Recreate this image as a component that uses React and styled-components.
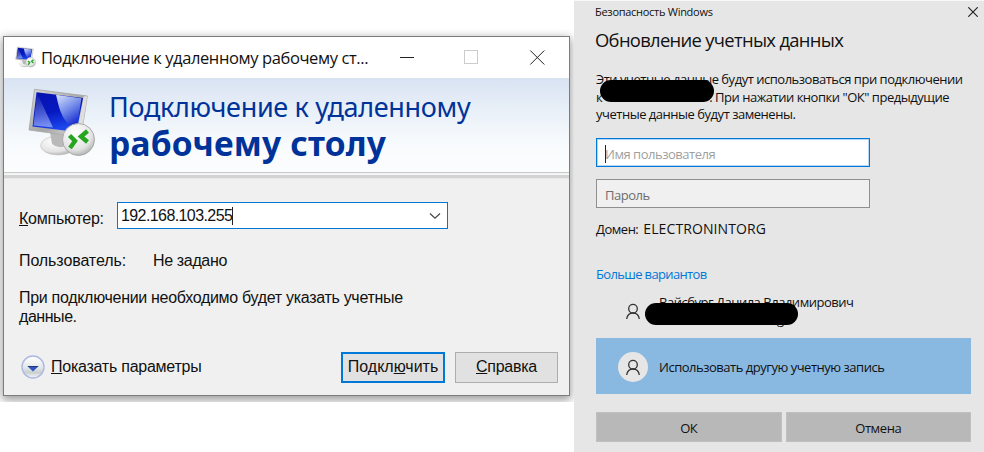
import React from "react";
import styled, { createGlobalStyle } from "styled-components";

const GlobalStyle = createGlobalStyle`
  * { box-sizing: border-box; }
  body { margin: 0; background: #fff; overflow: hidden; }
`;

const Page = styled.main`
  display: flex;
  width: 984px;
  height: 452px;
  background: #fff;
  font-family: "Open Sans", "Noto Sans", sans-serif;
  color: #111;
`;

const Desktop = styled.section`
  width: 574px;
  height: 375px;
  margin-top: 27px;
  padding: 9px 4px 7px 3px;
  background: #fff;
  overflow: hidden;
`;

const RdpWindow = styled.div`
  display: flex;
  flex-direction: column;
  width: 567px;
  height: 360px;
  border: 1px solid #7c7c7c;
  background: #f0f0f0;
  box-shadow: 0 3px 9px 1px rgba(0, 0, 0, 0.4);
`;

const TitleBar = styled.header`
  display: flex;
  align-items: center;
  height: 41px;
  flex: none;
  padding-left: 11px;
  background: #fff;
`;

const WindowTitle = styled.span`
  width: 330px;
  margin-left: 4px;
  font-size: 16.5px;
  letter-spacing: -0.39px;
  white-space: nowrap;
`;

const WindowControls = styled.div`
  display: flex;
  gap: 50px;
  margin-left: 29px;
`;

const Banner = styled.div`
  display: flex;
  height: 95px;
  flex: none;
  padding: 10px 0 0 23px;
  background: linear-gradient(#d8e3f2, #e9f0f8 35%, #f8fbfd 70%, #fcfdfd);
  border-bottom: 1px solid #c6c9cc;
`;

const BannerText = styled.div`
  display: flex;
  flex-direction: column;
  margin-left: 10px;
  color: #003399;
  font-family: "Noto Sans", sans-serif;
  white-space: nowrap;
`;

const BannerLight = styled.span`
  font-size: 27px;
  line-height: 38px;
  letter-spacing: -0.32px;
`;

const BannerBold = styled.span`
  font-size: 33.5px;
  font-weight: 700;
  line-height: 35px;
  letter-spacing: 0.2px;
`;

const Groove = styled.div`
  height: 6px;
  flex: none;
  background: linear-gradient(#f4f4f4 0 2px, #d3d3d3 2px 5px, #e8e8e8 5px);
`;

const RdpBody = styled.div`
  display: flex;
  flex-direction: column;
  flex: 1;
  padding: 23px 11px 12px 15px;
  font-family: "Liberation Sans", Arial, sans-serif;
  font-size: 16px;
  letter-spacing: -0.2px;
`;

const Row = styled.div`
  display: flex;
  align-items: center;
`;

const Copy = styled.span`
  width: ${(p) => (p.$w ? p.$w + "px" : "auto")};
  letter-spacing: ${(p) => p.$track || -0.25}px;
  white-space: nowrap;
  line-height: 19px;
`;

const ComputerLabel = styled(Copy)`
  padding-top: 5px;
`;

const Combo = styled.div`
  display: flex;
  align-items: center;
  width: 331px;
  height: 27px;
  padding: 0 6px 0 3px;
  border: 1px solid #0078d7;
  background: #fff;
  line-height: 19px;
`;

const ComboValue = styled.span`
  letter-spacing: -0.59px;
`;

const Caret = styled.span`
  width: 1px;
  height: 18px;
  margin-right: ${(p) => (p.$overlap ? -1 : 0)}px;
  background: #222;
`;

const Spacer = styled.span`
  flex: 1;
`;

const UserRow = styled(Row)`
  margin-top: 22px;
`;

const Notice = styled.div`
  display: flex;
  flex-direction: column;
  margin-top: 18px;
`;

const Footer = styled(Row)`
  margin-top: auto;
  height: 31px;
  padding-left: 2px;
`;

const FooterIcon = styled.span`
  display: flex;
  padding-bottom: 2px;
`;

const ToggleText = styled(Copy)`
  margin-left: 6px;
  padding-bottom: 2px;
`;

const PushButton = styled.button`
  width: ${(p) => (p.$primary ? 104 : 103)}px;
  height: 31px;
  margin-left: 10px;
  padding: 0 0 1px;
  border: ${(p) => (p.$primary ? "2px solid #0078d7" : "1px solid #adadad")};
  background: #e1e1e1;
  color: #111;
  font: inherit;
  letter-spacing: ${(p) => (p.$primary ? 0 : -0.25)}px;
`;

const Security = styled.section`
  display: flex;
  flex-direction: column;
  width: 410px;
  height: 452px;
  padding: 0 13px 0 22px;
  border-top: 1px solid #f8f8f8;
  background: #e6e6e6;
  font-size: 13px;
  letter-spacing: -0.48px;
`;

const SecurityBar = styled.header`
  display: flex;
  justify-content: space-between;
  align-items: center;
  height: 21px;
  margin: 0 -7px 0 -1px;
  font-size: 11px;
  letter-spacing: -0.28px;
`;

const Line = styled.span`
  white-space: pre;
`;

const Heading = styled.h1`
  margin: 5px 0 0 -1px;
  font-size: 18.4px;
  font-weight: 400;
  line-height: 26px;
  letter-spacing: -0.68px;
  white-space: nowrap;
`;

const Paragraph = styled.div`
  position: relative;
  display: flex;
  flex-direction: column;
  margin-top: 18px;
  line-height: 17.5px;
`;

const SplitLine = styled.div`
  display: flex;
`;

const Redaction = styled.span`
  position: absolute;
  left: ${(p) => p.$x}px;
  top: ${(p) => p.$y}px;
  width: ${(p) => p.$w}px;
  height: 22px;
  border-radius: 11px;
  background: #000;
`;

const HiddenHost = styled.span`
  width: 107px;
`;

const Field = styled.div`
  display: flex;
  align-items: center;
  width: 274px;
  height: 29px;
  margin-top: ${(p) => p.$gap}px;
  padding: 3px 8px 0;
  border: 1px solid ${(p) => (p.$focus ? "#0078d7" : "#8f8f8f")};
  outline: ${(p) => (p.$focus ? "1px solid rgba(0, 120, 215, 0.3)" : "none")};
  outline-offset: -2px;
  background: ${(p) => (p.$focus ? "#fff" : "#f0f0f0")};
  color: ${(p) => (p.$focus ? "#9f9f9f" : "#6e6e6e")};
`;

const Domain = styled.div`
  display: flex;
  align-items: center;
  height: 20px;
  margin-top: 11px;
`;

const DomainName = styled.span`
  margin-left: 5px;
  font-size: 14px;
  letter-spacing: 0.1px;
`;

const MoreLink = styled.a`
  margin-top: 25px;
  line-height: 20px;
  color: #0078d7;
  letter-spacing: -0.65px;
`;

const Account = styled.div`
  position: relative;
  display: flex;
  align-items: center;
  height: ${(p) => (p.$active ? 56 : 54)}px;
  width: 375px;
  padding: ${(p) => (p.$active ? 2 : 0)}px 0 0 22px;
  background: ${(p) => (p.$active ? "#89b9e1" : "transparent")};
`;

const Avatar = styled.span`
  display: flex;
  align-items: center;
  justify-content: center;
  width: 30px;
  height: 30px;
  margin-right: 11px;
  padding-top: 1px;
  border-radius: 50%;
  background: #e6e6e6;
`;

const AccountName = styled.div`
  display: flex;
  flex-direction: column;
  line-height: 17px;
`;

const AccountMail = styled.span`
  padding-left: 118px;
`;

const Actions = styled.div`
  display: grid;
  grid-template-columns: 1fr 1fr;
  gap: 4px;
  width: 375px;
  margin-top: 18px;
`;

const ActionButton = styled.button`
  height: 30px;
  padding: 3px 0 0;
  border: 1px solid #c0c0c0;
  background: #b8b8b8;
  color: #111;
  font: inherit;
  letter-spacing: -0.4px;
`;

function RemoteIcon({ size, h, id }) {
  return (
    <svg width={size} height={h} viewBox="0 0 72 72">
      <defs>
        <linearGradient id={id + "s"} x1="0" y1="0" x2="0.3" y2="1">
          <stop offset="0" stopColor="#0713b0" />
          <stop offset="0.55" stopColor="#0618c0" />
          <stop offset="1" stopColor="#1c49ee" />
        </linearGradient>
        <linearGradient id={id + "g"} x1="0.1" y1="0" x2="0.6" y2="1">
          <stop offset="0" stopColor="#d3dcfa" />
          <stop offset="0.5" stopColor="#7089e8" />
          <stop offset="1" stopColor="#0a1ed0" />
        </linearGradient>
        <linearGradient id={id + "l"} x1="0" y1="0" x2="0.1" y2="1">
          <stop offset="0" stopColor="#0a18a8" />
          <stop offset="1" stopColor="#a9bcff" />
        </linearGradient>
        <linearGradient id={id + "f"} x1="0" y1="0" x2="1" y2="1">
          <stop offset="0" stopColor="#d9d9d9" />
          <stop offset="0.55" stopColor="#a5a5a5" />
          <stop offset="1" stopColor="#ededed" />
        </linearGradient>
        <radialGradient id={id + "b"} cx="0.4" cy="0.3" r="0.75">
          <stop offset="0" stopColor="#fff" />
          <stop offset="0.7" stopColor="#e3e3e3" />
          <stop offset="1" stopColor="#aaa" />
        </radialGradient>
      </defs>
      <ellipse cx="31" cy="57.5" rx="17.5" ry="9.5" fill={`url(#${id}b)`} stroke="#c2c2c2" strokeWidth="0.6" />
      <path d="M23 44 L40 48 L39 58 Q31 61 25 56Z" fill="#b9b9b9" />
      <path d="M7.5 1.3 L60.3 8 L54 49 L2 42Z" fill={`url(#${id}f)`} stroke="#a5a5a5" strokeWidth="0.8" />
      <path d="M56.5 8.5 L60.3 8 L55 42 L50 46Z" fill="#dedede" />
      <path d="M9.5 4.3 L56 10 L49.5 44 L5.5 38.5Z" fill={`url(#${id}s)`} />
      <path d="M29 6.8 L54.5 10.2 L49.5 41 Q38 38 32 19Z" fill={`url(#${id}g)`} />
      <path d="M10 5 L26 39.5 L6.5 37.5Z" fill={`url(#${id}l)`} opacity="0.65" />
      <circle cx="51.5" cy="51.5" r="16" fill={`url(#${id}b)`} stroke="#aaa" strokeWidth="1" />
      <path d="M42.5 47.5 L48 53 L43 60" fill="none" stroke="#26a51f" strokeWidth="4.4" />
      <path d="M60.5 43 L54 48.5 L60.5 54" fill="none" stroke="#26a51f" strokeWidth="4.4" />
    </svg>
  );
}

const Person = () => (
  <svg width="16" height="17" viewBox="0 0 16 17" fill="none" stroke="#333" strokeWidth="1.3">
    <circle cx="8" cy="5.7" r="4.3" />
    <path d="M1.7 16 C2.2 12.5 4.5 10 8 10 C11.5 10 13.8 12.5 14.3 16" />
  </svg>
);

const CloseIcon = ({ size, width }) => (
  <svg width={size} height={size} viewBox="0 0 14 14">
    <path d="M0.4 0.4 L13.6 13.6 M13.6 0.4 L0.4 13.6" stroke="#222" strokeWidth={width} />
  </svg>
);

const ExpandIcon = () => (
  <svg width="24" height="24" viewBox="0 0 24 24">
    <defs>
      <linearGradient id="expand" x1="0" y1="0" x2="0" y2="1">
        <stop offset="0" stopColor="#fff" />
        <stop offset="0.5" stopColor="#e6e9eb" />
        <stop offset="0.75" stopColor="#c9d0d0" />
        <stop offset="1" stopColor="#f6f8f8" />
      </linearGradient>
    </defs>
    <circle cx="12" cy="12" r="11" fill="url(#expand)" stroke="#adb8e2" strokeWidth="1.4" />
    <path d="M6.8 11.4 H17.2 L12 16.5Z" fill="#3154c4" />
    <path d="M6.8 11.5 H17.2" stroke="#203878" strokeWidth="1" />
  </svg>
);

export default function App() {
  return (
    <>
      <GlobalStyle />
      <Page>
        <Desktop>
          <RdpWindow>
            <TitleBar>
              <RemoteIcon size={22} h={23} id="small" />
              <WindowTitle>Подключение к удаленному рабочему ст...</WindowTitle>
              <WindowControls>
                <svg width="14" height="14"><path d="M0 7.5 H14" stroke="#222" /></svg>
                <svg width="14" height="14"><rect x="0.5" y="0.5" width="13" height="13" fill="none" stroke="#ccc" /></svg>
                <svg width="17" height="15"><path d="M2.3 0.5 L16.3 14.5 M16.3 0.5 L2.3 14.5" stroke="#222" /></svg>
              </WindowControls>
            </TitleBar>
            <Banner>
              <RemoteIcon size={72} h={72} id="large" />
              <BannerText>
                <BannerLight>Подключение к удаленному</BannerLight>
                <BannerBold>рабочему столу</BannerBold>
              </BannerText>
            </Banner>
            <Groove />
            <RdpBody>
              <Row>
                <ComputerLabel $w={98}><u>К</u>омпьютер:</ComputerLabel>
                <Combo>
                  <ComboValue>192.168.103.255</ComboValue>
                  <Caret />
                  <Spacer />
                  <svg width="12" height="8"><path d="M1 1.5 L6 6.2 L11 1.5" fill="none" stroke="#444" strokeWidth="1.2" /></svg>
                </Combo>
              </Row>
              <UserRow>
                <Copy $w={134} $track={-0.1}>Пользователь:</Copy>
                <Copy $track={-0.35}>Не задано</Copy>
              </UserRow>
              <Notice>
                <Copy $track={-0.3}>При подключении необходимо будет указать учетные</Copy>
                <Copy $track={-0.45}>данные.</Copy>
              </Notice>
              <Footer>
                <FooterIcon><ExpandIcon /></FooterIcon>
                <ToggleText><u>П</u>оказать параметры</ToggleText>
                <Spacer />
                <PushButton $primary>Подкл<u>ю</u>чить</PushButton>
                <PushButton><u>С</u>правка</PushButton>
              </Footer>
            </RdpBody>
          </RdpWindow>
        </Desktop>
        <Security>
          <SecurityBar>
            <Line>Безопасность Windows</Line>
            <CloseIcon size={10} width={1.6} />
          </SecurityBar>
          <Heading>Обновление учетных данных</Heading>
          <Paragraph>
            <Line>Эти учетные данные будут использоваться при подключении</Line>
            <SplitLine>
              <Line>к</Line>
              <HiddenHost />
              <Line>. При нажатии кнопки "ОК" предыдущие</Line>
            </SplitLine>
            <Line>учетные данные будут заменены.</Line>
            <Redaction $x={4} $y={9} $w={114} />
          </Paragraph>
          <Field $focus $gap={14}>
            <Caret $overlap />
            <Line>Имя пользователя</Line>
          </Field>
          <Field $gap={12}>
            <Line>Пароль</Line>
          </Field>
          <Domain>
            <Line>Домен:</Line>
            <DomainName>ELECTRONINTORG</DomainName>
          </Domain>
          <MoreLink>Больше вариантов</MoreLink>
          <Account>
            <Avatar><Person /></Avatar>
            <AccountName>
              <Line>Вайсбург Данила Владимирович</Line>
              <AccountMail>g</AccountMail>
            </AccountName>
            <Redaction $x={49} $y={19} $w={153} />
          </Account>
          <Account $active>
            <Avatar><Person /></Avatar>
            <Line>Использовать другую учетную запись</Line>
          </Account>
          <Actions>
            <ActionButton>ОК</ActionButton>
            <ActionButton>Отмена</ActionButton>
          </Actions>
        </Security>
      </Page>
    </>
  );
}
